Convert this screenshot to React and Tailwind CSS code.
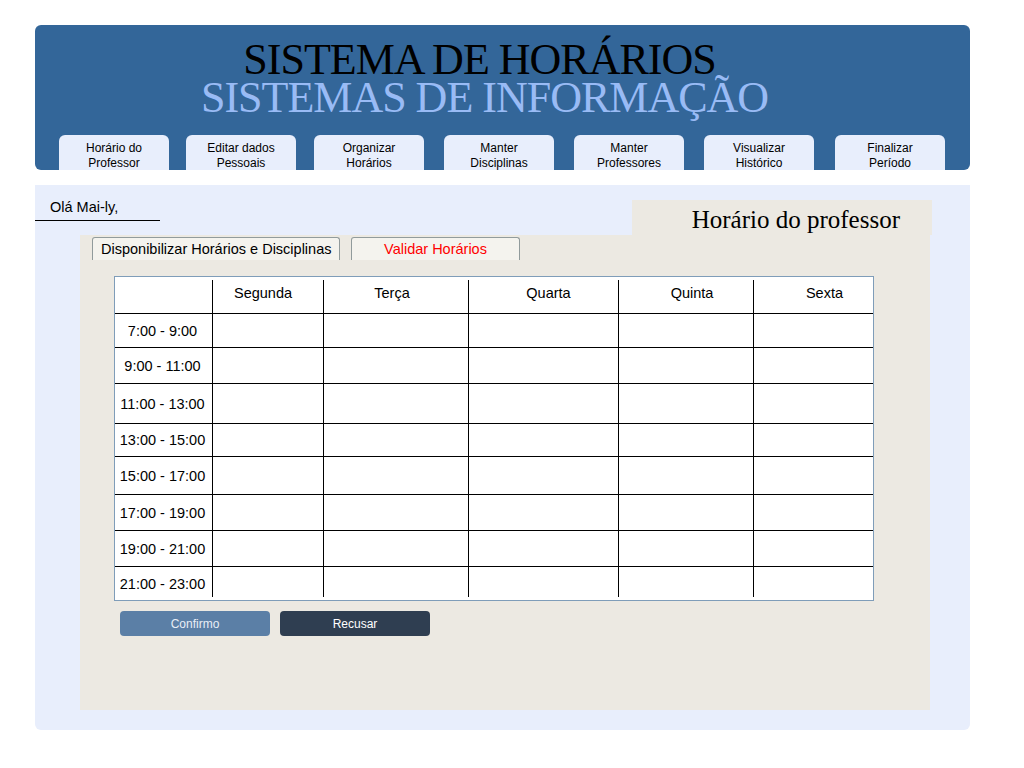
const navItems = [
  ['Horário do', 'Professor', 'ml-[24px]'],
  ['Editar dados', 'Pessoais', 'ml-[17px]'],
  ['Organizar', 'Horários', 'ml-[18px]'],
  ['Manter', 'Disciplinas', 'ml-[20px]'],
  ['Manter', 'Professores', 'ml-[20px]'],
  ['Visualizar', 'Histórico', 'ml-[20px]'],
  ['Finalizar', 'Período', 'ml-[21px]'],
];

const days = ['Segunda', 'Terça', 'Quarta', 'Quinta', 'Sexta'];
const dayWidths = ['w-[111px]', 'w-[145px]', 'w-[150px]', 'w-[135px]', 'w-[120px]'];
// small nudges so each day name sits where it does in the mockup
const dayNudge = ['pr-[10px]', 'pr-[8px]', 'pl-[10px]', 'pl-[12px]', 'pl-[22px]'];

const slots = [
  ['7:00 - 9:00', 'h-[34px]'],
  ['9:00 - 11:00', 'h-[36px]'],
  ['11:00 - 13:00', 'h-[40px]'],
  ['13:00 - 15:00', 'h-[33px]'],
  ['15:00 - 17:00', 'h-[38px]'],
  ['17:00 - 19:00', 'h-[36px]'],
  ['19:00 - 21:00', 'h-[36px]'],
  ['21:00 - 23:00', 'h-[34px]'],
];

const sans = "font-['Liberation_Sans',Arial,sans-serif]";
const serif = "font-['Liberation_Serif','Times_New_Roman',serif]";

function Header() {
  return (
    <div className="bg-[#336699] rounded-md h-[145px] pt-[16px] flex flex-col">
      <div className={`${serif} text-[44px] leading-[38px] tracking-[-1px] text-black text-center pr-[46px]`}>
        SISTEMA DE HORÁRIOS
      </div>
      <div className={`${serif} text-[44px] leading-[38px] tracking-[-1px] text-[#99bbf5] text-center pr-[36px]`}>
        SISTEMAS DE INFORMAÇÃO
      </div>
      <div className="mt-auto flex">
        {navItems.map(([a, b, m], i) => (
          <div
            key={i}
            className={`${sans} ${m} w-[110px] h-[35px] bg-[#e8eefc] rounded-t-md text-[12px] leading-[15px] text-black text-center pt-[6px]`}
          >
            <div>{a}</div>
            <div>{b}</div>
          </div>
        ))}
      </div>
    </div>
  );
}

function Schedule() {
  return (
    <div className={`${sans} w-[760px] border border-[#7f9db9] bg-white text-[14.5px] text-black`}>
      <div className="flex h-[36px]">
        <div className="w-[97px]" />
        {days.map((d, i) => (
          <div key={d} className={`${dayWidths[i]} ${dayNudge[i]} mt-[3px] border-l border-black flex items-center justify-center pb-[6px]`}>
            {d}
          </div>
        ))}
      </div>
      {slots.map(([label, h], r) => (
        <div key={label} className={`flex ${h} border-t border-black`}>
          <div className="w-[97px] flex items-center justify-center pt-[2px] pr-[2px]">{label}</div>
          {days.map((d, i) => (
            <div key={d} className={`${dayWidths[i]} border-l border-black ${r === slots.length - 1 ? 'mb-[3px]' : ''}`} />
          ))}
        </div>
      ))}
    </div>
  );
}

export default function App() {
  return (
    <div className="w-[1024px] h-[768px] bg-white pt-[25px] px-[35px]">
      <div className="w-[935px]">
        <Header />

        <div className="mt-[15px] bg-[#e8eefc] rounded-b-md pb-[20px]">
          <div className="flex items-start">
            <div className={`${sans} w-[125px] border-b border-black pl-[15px] pt-[13px] pb-[4px] text-[14.5px] leading-[18px] text-black`}>
              Olá Mai-ly,
            </div>
            <div className={`${serif} ml-auto mr-[38px] mt-[15px] w-[300px] h-[35px] bg-[#ece9e2] text-right pr-[32px] pt-[2px] text-[25px] leading-[35px] text-black`}>
              Horário do professor
            </div>
          </div>

          <div className="ml-[45px] w-[850px] h-[475px] bg-[#ece9e2] pt-[2px]">
            <div className={`${sans} flex gap-[11px] pl-[12px] text-[14.5px]`}>
              <div className="w-[248px] h-[23px] bg-[#f4f3ee] border border-b-0 border-[#919b9c] rounded-t-[3px] pl-[8px] leading-[22px] text-black whitespace-nowrap">
                Disponibilizar Horários e Disciplinas
              </div>
              <div className="w-[169px] h-[23px] bg-[#f4f3ee] border border-b-0 border-[#919b9c] rounded-t-[3px] text-center leading-[22px] text-[#ff0000]">
                Validar Horários
              </div>
            </div>

            <div className="ml-[34px] mt-[16px]">
              <Schedule />
            </div>

            <div className={`${sans} flex gap-[10px] ml-[40px] mt-[10px] text-[12px]`}>
              <button className="w-[150px] h-[25px] rounded-[4px] bg-[#5b7fa6] text-[#e8eef6]">Confirmo</button>
              <button className="w-[150px] h-[25px] rounded-[4px] bg-[#2f3e51] text-white">Recusar</button>
            </div>
          </div>
        </div>
      </div>
    </div>
  );
}
